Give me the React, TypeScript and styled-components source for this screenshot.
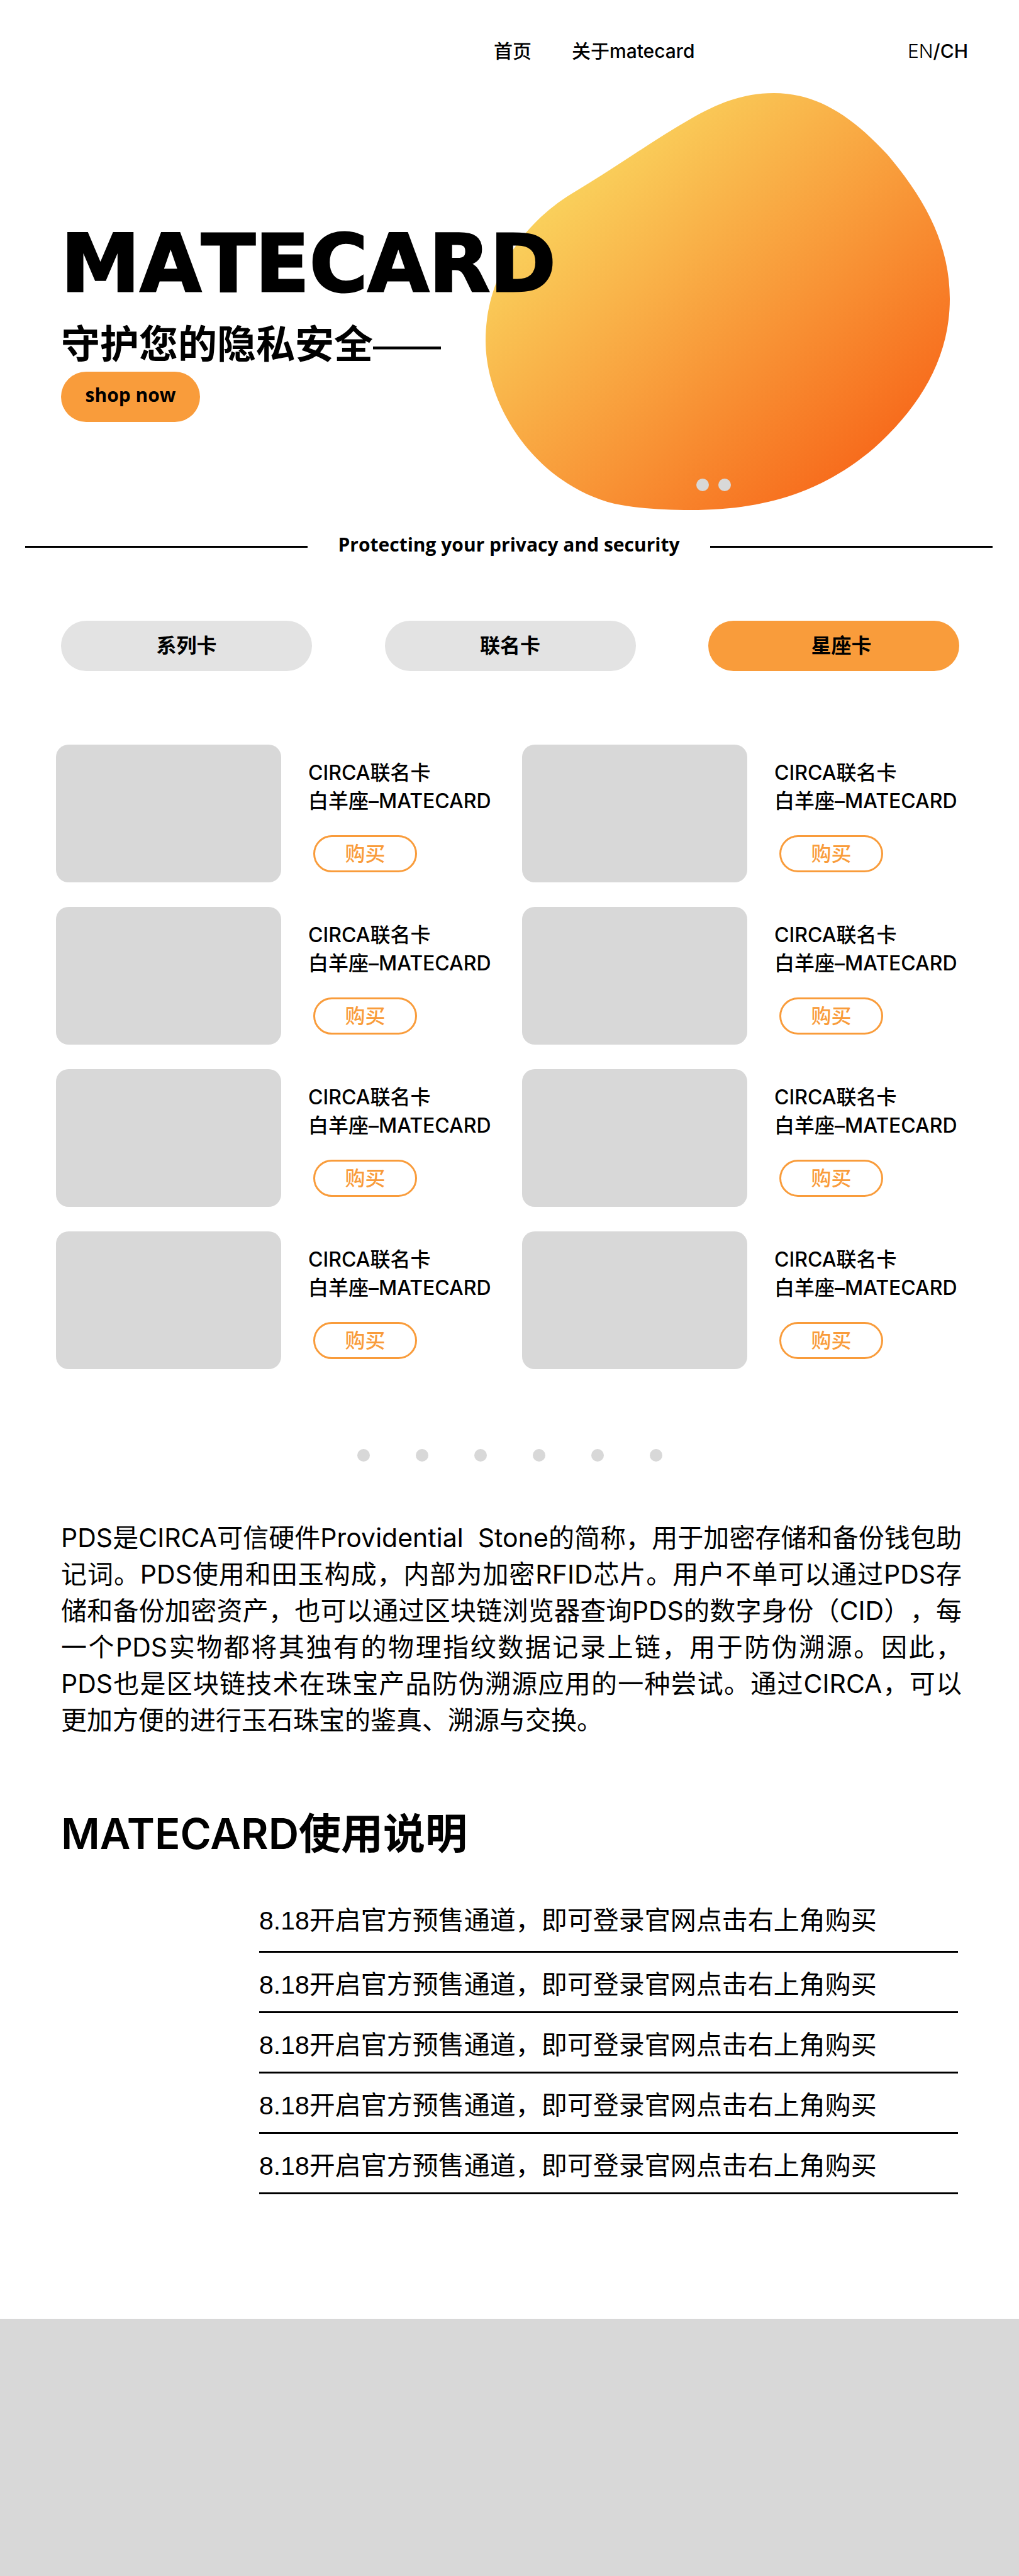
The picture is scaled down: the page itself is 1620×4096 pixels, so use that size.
import React, { useState } from 'react';
import styled, { createGlobalStyle } from 'styled-components';

const ORANGE = '#f99c3b';
const GREY = '#d8d8d8';
const SANS = `Inter, "Noto Sans CJK SC", "Liberation Sans", sans-serif`;
const PLAIN = `"Liberation Sans", "Noto Sans CJK SC", sans-serif`;
const HUMANIST = `"Open Sans", "Noto Sans", sans-serif`;

const GlobalStyle = createGlobalStyle`
  *, *::before, *::after { box-sizing: border-box; }
  body {
    margin: 0;
    background: #fff;
    color: #000;
    font-family: ${SANS};
  }
  button { font-family: inherit; color: inherit; cursor: pointer; }
  h1, h2, h3, p, ul { margin: 0; padding: 0; }
`;

const Header = styled.header`
  display: flex;
  align-items: center;
  height: 162px;
  padding: 0 81px 0 785px;
  font-size: 30px;
  line-height: 40px;
`;

const Nav = styled.nav`
  display: flex;
  gap: 64px;
  flex: 1;
`;

const NavLink = styled.a`
  color: inherit;
  font-weight: 500;
  text-decoration: none;
`;

const Language = styled.div`
  display: flex;
  font-weight: 500;
`;

const LanguageLink = styled.a<{ $light?: boolean }>`
  color: inherit;
  font-weight: ${(p) => (p.$light ? 300 : 500)};
  text-decoration: none;
`;

const Hero = styled.section`
  position: relative;
  height: 678px;
  padding: 192px 97px 0;
`;

const Blob = styled.svg`
  position: absolute;
  top: -14px;
  right: 110px;
  width: 738px;
  height: 663px;
`;

const HeroText = styled.div`
  position: relative;
  display: flex;
  flex-direction: column;
  align-items: flex-start;
`;

const Title = styled.h1`
  font-family: "DejaVu Sans", sans-serif;
  font-size: 126px;
  line-height: 132px;
  font-weight: 700;
  font-kerning: none;
  -webkit-text-stroke: 3px #000;
`;

const Subtitle = styled.p`
  margin-top: 22px;
  font-size: 62px;
  line-height: 80px;
  font-weight: 600;
`;

const Dash = styled.span`
  font-size: 54px;
  font-weight: 400;
`;

const ShopButton = styled.button`
  width: 221px;
  height: 80px;
  padding: 0 0 6px;
  border: 0;
  border-radius: 40px;
  background: ${ORANGE};
  font-family: ${HUMANIST};
  font-size: 30px;
  line-height: 40px;
  font-weight: 700;
`;

const HeroDots = styled.div`
  position: absolute;
  right: 458px;
  bottom: 59px;
  display: flex;
  gap: 15px;
`;

const Dot = styled.button`
  width: 20px;
  height: 20px;
  padding: 0;
  border: 0;
  border-radius: 50%;
  background: ${GREY};
`;

const Slogan = styled.div`
  display: flex;
  align-items: center;
  gap: 48px;
  height: 58px;
  padding: 0 42px 0 40px;

  &::before,
  &::after {
    content: '';
    flex: 1;
    height: 3px;
    background: #000;
  }
`;

const SloganText = styled.p`
  padding-bottom: 6px;
  font-family: ${HUMANIST};
  font-size: 30px;
  line-height: 40px;
  font-weight: 700;
`;

const Tabs = styled.div`
  display: flex;
  justify-content: space-between;
  margin-top: 89px;
  padding: 0 95px 0 97px;
`;

const Tab = styled.button<{ $active: boolean }>`
  width: 399px;
  height: 80px;
  padding: 0 0 0 ${(p) => (p.$active ? '24px' : '0')};
  border: 0;
  border-radius: 40px;
  background: ${(p) => (p.$active ? ORANGE : '#e3e3e3')};
  font-size: 32px;
  line-height: 40px;
  font-weight: 600;
`;

const CardGrid = styled.section`
  display: grid;
  grid-template-columns: repeat(2, 1fr);
  gap: 39px 0;
  margin-top: 117px;
  padding: 0 49px 0 89px;
`;

const Card = styled.article`
  display: flex;
  gap: 43px;
`;

const CardImage = styled.div`
  width: 358px;
  height: 219px;
  border-radius: 20px;
  background: ${GREY};
`;

const CardBody = styled.div`
  padding-top: 22px;
`;

const CardName = styled.h3`
  font-size: 32px;
  line-height: 45px;
  font-weight: 500;
  white-space: nowrap;
`;

const BuyButton = styled.button`
  display: block;
  width: 165px;
  height: 59px;
  margin: 32px 0 0 8px;
  border: 3px solid ${ORANGE};
  border-radius: 30px;
  background: transparent;
  color: ${ORANGE};
  font-size: 32px;
  line-height: 40px;
  font-weight: 500;
`;

const Pager = styled.div`
  display: flex;
  justify-content: center;
  gap: 73px;
  margin-top: 127px;
`;

const About = styled.p`
  margin-top: 92px;
  padding: 0 91px 0 97px;
  font-size: 41px;
  line-height: 58px;
  text-align: justify;
  text-spacing-trim: space-all;
`;

const Guide = styled.section`
  padding: 0 97px;
  margin-top: 112px;
`;

const GuideTitle = styled.h2`
  font-size: 67px;
  line-height: 80px;
  font-weight: 600;
`;

const Steps = styled.ul`
  margin: 69px 0 0 315px;
  list-style: none;
`;

const Step = styled.li`
  height: 96px;
  padding-top: 22px;
  border-bottom: 3px solid #000;
  font-family: ${PLAIN};
  font-size: 41px;
  line-height: 58px;

  &:first-child {
    height: 80px;
    padding-top: 0;
  }
`;

const Footer = styled.footer`
  height: 409px;
  margin-top: 198px;
  background: ${GREY};
`;

const tabs = ['系列卡', '联名卡', '星座卡'];
const cards = Array.from({ length: 8 }, (_, i) => i);
const steps = Array.from({ length: 5 }, () => '8.18开启官方预售通道，即可登录官网点击右上角购买');

export default function App() {
  const [active, setActive] = useState('星座卡');

  return (
    <>
      <GlobalStyle />
      <Header>
        <Nav>
          <NavLink href="#home">首页</NavLink>
          <NavLink href="#about">关于matecard</NavLink>
        </Nav>
        <Language>
          <LanguageLink href="#en" $light>EN</LanguageLink>/
          <LanguageLink href="#ch">CH</LanguageLink>
        </Language>
      </Header>

      <main>
        <Hero id="home">
          <Blob viewBox="772 148 738 663" aria-hidden="true">
            <defs>
              <linearGradient id="sun" gradientUnits="userSpaceOnUse" x1="885" y1="240" x2="1355" y2="755">
                <stop offset="0" stopColor="#fad961" />
                <stop offset="1" stopColor="#f76b1c" />
              </linearGradient>
            </defs>
            <path
              fill="url(#sun)"
              d="M917 303 C985 262 1040 222 1098 189 C1140 165 1180 148 1230 148 C1295 148 1350 180 1411 246 C1472 318 1510 390 1510 475 C1510 570 1462 648 1389 713 C1310 780 1220 811 1098 811 C1055 811 1010 808 977 801 C858 772 772 652 772 541 C772 450 822 358 917 303 Z"
            />
          </Blob>
          <HeroText>
            <Title>MATECARD</Title>
            <Subtitle>
              守护您的隐私安全<Dash>——</Dash>
            </Subtitle>
            <ShopButton type="button">shop now</ShopButton>
          </HeroText>
          <HeroDots>
            <Dot type="button" aria-label="1" />
            <Dot type="button" aria-label="2" />
          </HeroDots>
        </Hero>

        <Slogan>
          <SloganText>Protecting your privacy and security</SloganText>
        </Slogan>

        <Tabs>
          {tabs.map((name) => (
            <Tab key={name} type="button" $active={name === active} onClick={() => setActive(name)}>
              {name}
            </Tab>
          ))}
        </Tabs>

        <CardGrid>
          {cards.map((id) => (
            <Card key={id}>
              <CardImage />
              <CardBody>
                <CardName>
                  CIRCA联名卡
                  <br />
                  白羊座–MATECARD
                </CardName>
                <BuyButton type="button">购买</BuyButton>
              </CardBody>
            </Card>
          ))}
        </CardGrid>

        <Pager>
          {[1, 2, 3, 4, 5, 6].map((page) => (
            <Dot key={page} type="button" aria-label={String(page)} />
          ))}
        </Pager>

        <About id="about">
          PDS是CIRCA可信硬件Providential&nbsp; Stone的简称，用于加密存储和备份钱包助记词。PDS使用和田玉构成，内部为加密RFID芯片。用户不单可以通过PDS存储和备份加密资产，也可以通过区块链浏览器查询PDS的数字身份（CID），每一个PDS实物都将其独有的物理指纹数据记录上链，用于防伪溯源。因此，PDS也是区块链技术在珠宝产品防伪溯源应用的一种尝试。通过CIRCA，可以更加方便的进行玉石珠宝的鉴真、溯源与交换。
        </About>

        <Guide>
          <GuideTitle>MATECARD使用说明</GuideTitle>
          <Steps>
            {steps.map((text, i) => (
              <Step key={i}>{text}</Step>
            ))}
          </Steps>
        </Guide>
      </main>
      <Footer />
    </>
  );
}
